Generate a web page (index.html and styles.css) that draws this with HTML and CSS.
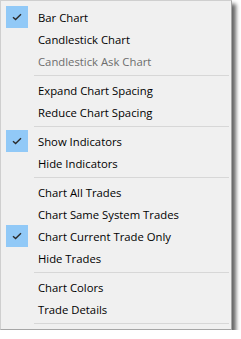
FILE: index.html
```html
<!DOCTYPE html>
<html lang="en">
<head>
    <meta charset="UTF-8">
    <title>Chart Menu</title>
    <link rel="stylesheet" href="styles.css">
</head>
<body>
    <div class="menu">
        <div class="item checked"><span class="icon"><svg width="10" height="8" viewBox="0 0 10 8"><path d="M1 4.2 L3.6 6.6 L9 1.2" fill="none" stroke="#2b2b2b" stroke-width="1.4"/></svg></span><span class="label">Bar Chart</span></div>
        <div class="item"><span class="icon"></span><span class="label">Candlestick Chart</span></div>
        <div class="item disabled"><span class="icon"></span><span class="label">Candlestick Ask Chart</span></div>
        <div class="sep"></div>
        <div class="item"><span class="icon"></span><span class="label">Expand Chart Spacing</span></div>
        <div class="item"><span class="icon"></span><span class="label">Reduce Chart Spacing</span></div>
        <div class="sep"></div>
        <div class="item checked"><span class="icon"><svg width="10" height="8" viewBox="0 0 10 8"><path d="M1 4.2 L3.6 6.6 L9 1.2" fill="none" stroke="#2b2b2b" stroke-width="1.4"/></svg></span><span class="label">Show Indicators</span></div>
        <div class="item"><span class="icon"></span><span class="label">Hide Indicators</span></div>
        <div class="sep"></div>
        <div class="item"><span class="icon"></span><span class="label">Chart All Trades</span></div>
        <div class="item"><span class="icon"></span><span class="label">Chart Same System Trades</span></div>
        <div class="item checked"><span class="icon"><svg width="10" height="8" viewBox="0 0 10 8"><path d="M1 4.2 L3.6 6.6 L9 1.2" fill="none" stroke="#2b2b2b" stroke-width="1.4"/></svg></span><span class="label">Chart Current Trade Only</span></div>
        <div class="item"><span class="icon"></span><span class="label">Hide Trades</span></div>
        <div class="sep"></div>
        <div class="item"><span class="icon"></span><span class="label">Chart Colors</span></div>
        <div class="item"><span class="icon"></span><span class="label">Trade Details</span></div>
        <div class="sep"></div>
    </div>
</body>
</html>
```

FILE: styles.css
```css
body {
    margin: 0;
    background-color: #fff;
    font-family: 'Open Sans', 'Noto Sans', sans-serif;
    font-size: 11.3px;
}

.menu {
    box-sizing: border-box;
    width: 232px;
    height: 330px;
    border: 1px solid #a6a6a6;
    border-left-color: #cfcfcf;
    border-top-color: #cfcfcf;
    background-color: #f0f0f0;
    box-shadow: 4px 4px 4px rgba(0, 0, 0, 0.6);
    padding-top: 5px;
}

.item {
    display: flex;
    align-items: center;
    height: 22px;
    color: #000;
}

.icon {
    width: 22px;
    height: 22px;
    margin-left: 5px;
    margin-right: 10px;
    display: flex;
    align-items: center;
    justify-content: center;
}

.checked .icon {
    background-color: #91c9f7;
}

.disabled {
    color: #6d6d6d;
}

.sep {
    height: 1px;
    background-color: #d7d7d7;
    margin: 3px 2px 3px 33px;
}
```
